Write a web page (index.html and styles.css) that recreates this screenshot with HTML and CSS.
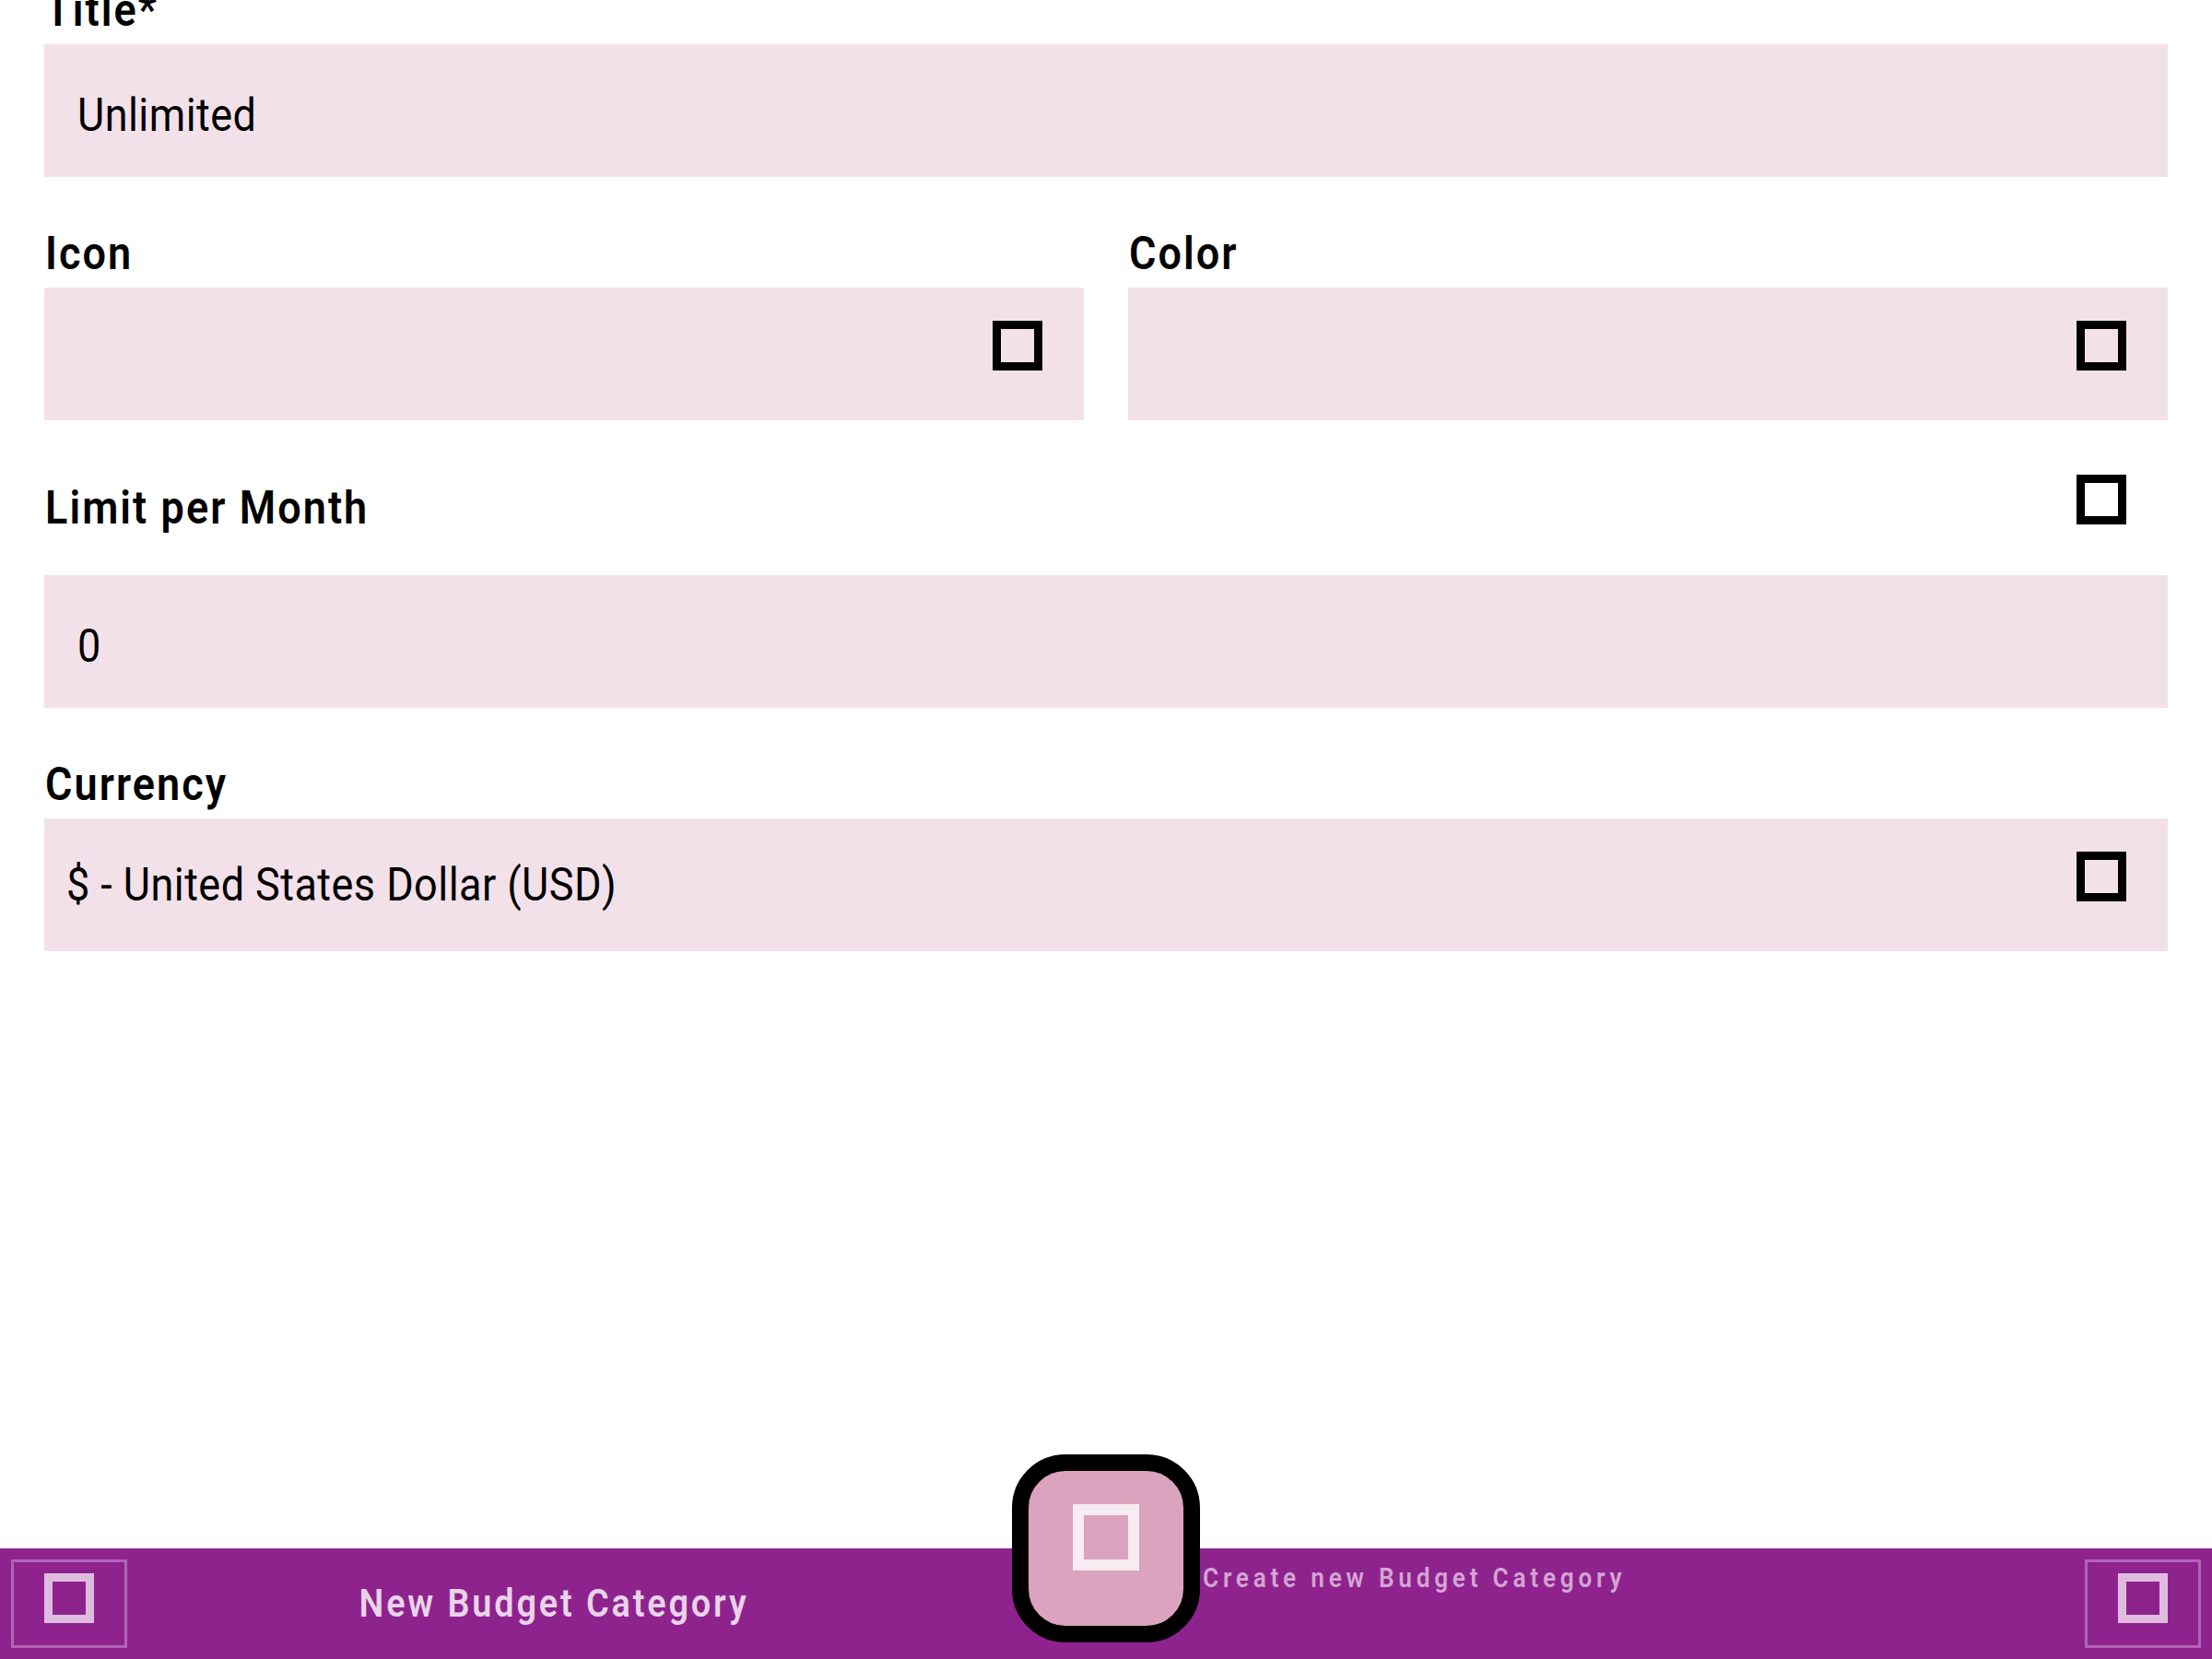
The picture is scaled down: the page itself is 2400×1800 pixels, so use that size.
FILE: index.html
```html
<!DOCTYPE html>
<html lang="en">
<head>
<meta charset="utf-8">
<title>New Budget Category</title>
<link rel="stylesheet" href="styles.css">
</head>
<body>
<div class="page">
  <main class="form">
    <div class="field">
      <label class="label"><span class="cond">Title*</span></label>
      <div class="input text-input"><span class="cond">Unlimited</span></div>
    </div>
    <div class="row-2">
      <div class="field">
        <label class="label"><span class="cond">Icon</span></label>
        <div class="input icon-input"><span class="tofu"></span></div>
      </div>
      <div class="field">
        <label class="label"><span class="cond">Color</span></label>
        <div class="input icon-input"><span class="tofu"></span></div>
      </div>
    </div>
    <div class="field">
      <div class="label-row">
        <label class="label"><span class="cond">Limit per Month</span></label>
        <span class="tofu-wrap"><span class="tofu"></span></span>
      </div>
      <div class="input text-input"><span class="cond">0</span></div>
    </div>
    <div class="field">
      <label class="label"><span class="cond">Currency</span></label>
      <div class="input select-input">
        <span class="select-text cond">$ - United States Dollar (USD)</span>
        <span class="tofu"></span>
      </div>
    </div>
  </main>

  <footer class="bar">
    <div class="bar-half bar-left">
      <button class="bar-btn"><span class="bar-tofu"></span></button>
      <h1 class="bar-title">New Budget Category</h1>
    </div>
    <div class="bar-half bar-right">
      <button class="bar-btn"><span class="bar-tofu"></span></button>
    </div>
    <div class="fab-wrap">
      <button class="fab"><span class="fab-tofu"></span></button>
      <span class="fab-label">Create new Budget Category</span>
    </div>
  </footer>
</div>
</body>
</html>
```

FILE: styles.css
```css
* { box-sizing: border-box; }

html, body {
  margin: 0;
  padding: 0;
  background: #ffffff;
}

body {
  font-family: Roboto, "Noto Sans", "Liberation Sans", sans-serif;
  color: #000;
  width: 2400px;
  height: 1800px;
  overflow: hidden;
}

.page {
  position: relative;
  width: 2400px;
  height: 1800px;
  display: flex;
  flex-direction: column;
  overflow: hidden;
}

/* narrow glyphs, as in the reference */
.cond {
  display: inline-block;
  white-space: nowrap;
  transform: scaleX(0.9);
  transform-origin: left center;
}

.form {
  flex: 1;
  display: flex;
  flex-direction: column;
  gap: 55px;
  padding: 0 48px;
  margin-top: -17px;
}

.field {
  display: flex;
  flex-direction: column;
}

.row-2 {
  display: grid;
  grid-template-columns: 1fr 1fr;
  column-gap: 48px;
}

.label {
  display: block;
  font-size: 50px;
  line-height: 56px;
  font-weight: 600;
  letter-spacing: 2.3px;
  margin: 0 0 9px 1px;
}

.label-row {
  height: 80px;
  display: flex;
  align-items: center;
  justify-content: space-between;
  margin-bottom: 33px;
}

.label-row .label {
  margin: 0 0 0 1px;
}

.tofu-wrap {
  display: flex;
  padding-right: 45px;
}

.tofu-wrap .tofu {
  margin-bottom: 18px;
}

.input {
  height: 144px;
  background: #f3e1ea;
  font-size: 50px;
  line-height: 56px;
  font-weight: 400;
  letter-spacing: 0.5px;
}

.text-input {
  padding: 49px 36px 0 36px;
}

.icon-input {
  display: flex;
  justify-content: flex-end;
  align-items: flex-start;
  padding: 36px 45px 0 0;
}

.select-input {
  display: flex;
  justify-content: space-between;
  align-items: flex-start;
  padding: 36px 45px 0 24px;
}

.select-text {
  margin-top: 8px;
}

.tofu {
  display: block;
  width: 54px;
  height: 54px;
  border: 9px solid #000;
  flex: none;
}

/* bottom bar */
.bar {
  position: relative;
  height: 120px;
  flex: none;
  background: #8e238e;
  display: grid;
  grid-template-columns: 1fr 1fr;
}

.bar-half {
  display: grid;
  align-items: center;
}

.bar-left > * { grid-area: 1 / 1; }

.bar-left .bar-btn { justify-self: start; margin-left: 12px; }
.bar-right .bar-btn { justify-self: end; margin-right: 12px; }

.bar-btn {
  width: 126px;
  height: 96px;
  border: 3px solid #b264b6;
  background: transparent;
  padding: 0;
  display: flex;
  align-items: center;
  justify-content: center;
}

.bar-tofu {
  display: block;
  width: 54px;
  height: 54px;
  border: 9px solid #dfbcdf;
  margin-bottom: 12px;
}

.bar-title {
  justify-self: center;
  margin: 0 0 0 2px;
  font-size: 42px;
  line-height: 50px;
  font-weight: 600;
  letter-spacing: 3.2px;
  color: #e9d3e9;
  white-space: nowrap;
  transform: scaleX(0.9);
  transform-origin: center center;
}

.fab-wrap {
  position: absolute;
  left: 1098px;
  top: -102px;
  display: flex;
  align-items: flex-start;
}

.fab {
  width: 204px;
  height: 204px;
  border: 18px solid #000;
  border-radius: 58px;
  background: #dba3bd;
  padding: 0;
  display: flex;
  align-items: center;
  justify-content: center;
  flex: none;
}

.fab-tofu {
  display: block;
  width: 72px;
  height: 72px;
  border: 12px solid #f8ebf2;
  margin-bottom: 24px;
}

.fab-label {
  display: inline-block;
  margin: 117px 0 0 3px;
  font-size: 29px;
  line-height: 34px;
  font-weight: 600;
  letter-spacing: 5.35px;
  color: #d4a4d4;
  white-space: nowrap;
  transform: scaleX(0.9);
  transform-origin: left center;
}
```
